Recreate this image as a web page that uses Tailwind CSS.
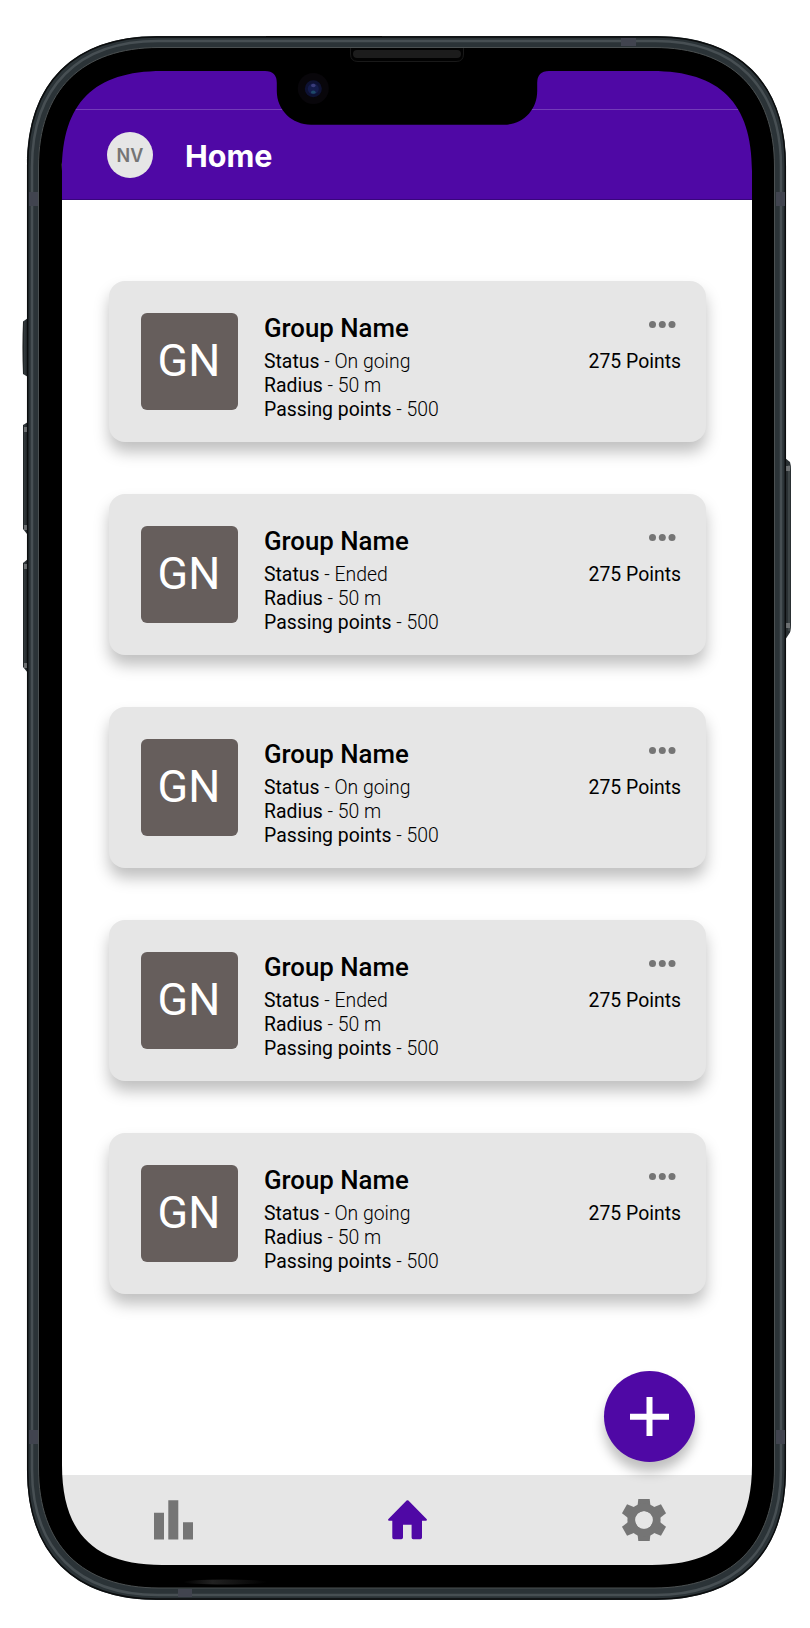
<!DOCTYPE html>
<html lang="en">
<head>
<meta charset="utf-8">
<title>Home</title>
<script src="https://cdn.jsdelivr.net/npm/@tailwindcss/browser@4"></script>
</head>
<body class="bg-white">
<div class="relative h-[1628px] w-[810px] overflow-hidden bg-white pl-[62px] pt-[71px] font-['Roboto',sans-serif] text-black">
  <!-- Screen -->
  <div class="relative flex h-[1494px] w-[690px] flex-col bg-white">
    <header class="flex h-[129px] flex-col border-b border-[#39067c] bg-[#4f08a5]">
      <div class="h-[39px] border-b border-[#733bb8]"></div>
      <div class="flex items-center gap-[32px] pl-[45px] pt-[22px]">
        <div class="flex size-[46px] items-center justify-center rounded-full bg-[#e6e6e6] pt-px font-['Inter',sans-serif] text-[18px] font-semibold text-[#757575]">NV</div>
        <h1 class="pt-px font-['Inter',sans-serif] text-[30.5px] leading-[45px] font-bold text-white">Home</h1>
      </div>
    </header>
    <main id="groups" class="flex flex-1 flex-col gap-[52px] px-[47px] pt-[81px]"></main>
    <nav class="flex h-[90px] items-start bg-[#e6e6e6]">
      <svg class="ml-[92px] mt-[25px] h-[40px] w-[39px]" viewBox="0 0 39 40" fill="#757575"><path d="M0 12.8h10v26.7H0zM14.3 .3h10v39.2h-10zM29 22.3h10v17.2H29z"/></svg>
      <svg class="ml-[195px] mt-[25px] h-[40px] w-[39px]" viewBox="0 0 39 40" fill="#4f08a5"><path d="M18.6.6Q19.5-.2 20.4.6L38.8 19.2Q39.2 20.7 38 20.7H34V37.6Q34 39.3 32.3 39.3H25.2Q23.6 39.3 23.6 37.6V24.8H15V37.6Q15 39.3 13.3 39.3H6Q4.300 39.300 4.300 37.600V20.700H1Q-.2 20.700.2 19.200Z"/></svg>
      <svg class="ml-[194.500px] mt-[23px] size-[44px] overflow-visible" viewBox="-22 -22 44 44" fill="#757575">
        <defs><path id="tooth" d="M-5.100-22.500H5.100L6.500-12H-6.500Z"/></defs>
        <path d="M-5.700-21H5.700L6.700-12H-6.700ZM-5.700 21H5.700L6.700 12H-6.700Z"/>
        <use href="#tooth" transform="rotate(60)"/><use href="#tooth" transform="rotate(120)"/>
        <use href="#tooth" transform="rotate(240)"/><use href="#tooth" transform="rotate(300)"/>
        <circle r="12.600" fill="none" stroke="#757575" stroke-width="8"/>
        <circle r="8.700" fill="#e6e6e6"/>
      </svg>
    </nav>
    <button class="absolute left-[542px] top-[1300px] flex size-[91px] items-center justify-center rounded-full bg-[#4f08a5] shadow-[0_10px_12px_rgba(0,0,0,0.25)]">
      <svg class="size-[39px]" viewBox="0 0 39 39" fill="#fff"><path d="M16.500 0h6v16.700H39v6H22.500V39h-6V22.700H0v-6h16.500z"/></svg>
    </button>
  </div>

  <!-- Device frame -->
  <svg class="pointer-events-none absolute left-0 top-0" width="810" height="1628" viewBox="0 0 810 1628" fill="none">
    <defs>
      <linearGradient id="btnL" x1="0" x2="1"><stop offset="0" stop-color="#050607"/><stop offset=".3" stop-color="#343b3e"/><stop offset="1" stop-color="#1b2023"/></linearGradient>
      <linearGradient id="gloss"><stop offset="0" stop-color="#222" stop-opacity="0"/><stop offset=".35" stop-color="#222"/><stop offset="1" stop-color="#222" stop-opacity="0"/></linearGradient>
    </defs>
    <g fill="url(#btnL)">
      <path d="M28 318L23 321.500Q22 347 23 374L28 377ZM28 422L23 425V529L27 534H28ZM28 559L23 563V667L28 673Z"/>
    </g>
    <path d="M785 458L790 462Q791 465 791 470V625Q791 632 789 634L785 640Z" fill="#2a3033"/>
    <path d="M789 465V631" stroke="#51585b"/>
    <path d="M785.500 458V640M27.500 318V377M27.500 422V534M27.500 559V673" stroke="#070808"/>
    <g fill="#6d7072"><rect x="24" y="427" width="4" height="5"/><rect x="24" y="525" width="4" height="5"/><rect x="24" y="564" width="4" height="5"/><rect x="24" y="663" width="4" height="5"/><rect x="786" y="466" width="4" height="5"/><rect x="786" y="623" width="4" height="5"/></g>

    <path fill-rule="evenodd" fill="#2b3337" d="M27 166C27 83 74 36 157 36H656C739 36 786 83 786 166V1470C786 1553 739 1600 656 1600H157C74 1600 27 1553 27 1470ZM50 170C50 97 88 59 161 59H653C726 59 764 97 764 170V1466C764 1539 726 1577 653 1577H161C88 1577 50 1539 50 1466Z"/>
    <path stroke="#0b0d0e" stroke-width="1.500" d="M27.700 166C27.700 83 74 37 157 37H656C739 37 785.300 83 785.300 166V1470C785.300 1553 739 1599 656 1599H157C74 1599 27.700 1553 27.700 1470Z"/>
    <path stroke="#474f53" stroke-width="2.500" d="M32 167C32 87 78 41 158 41H655C735 41 781 87 781 167V1469C781 1549 735 1595 655 1595H158C78 1595 32 1549 32 1469Z"/>
    <g fill="#41444f"><rect x="29" y="192" width="9" height="14"/><rect x="776" y="192" width="9" height="14"/><rect x="29" y="1430" width="9" height="14"/><rect x="776" y="1430" width="9" height="14"/><rect x="621" y="38" width="15" height="8"/><rect x="178" y="1589" width="14" height="8"/></g>

    <!-- Bezel with the screen opening and notch -->
    <path fill-rule="evenodd" fill="#000" stroke="none" d="M38.500 167C38.500 90 82 47.500 159 47.500H654C731 47.500 774.500 90 774.500 167V1468C774.500 1545 731 1588 654 1588H159C82 1588 38.500 1545 38.500 1468ZM62 171C62 103 94 71 162 71H265Q276.800 71 276.800 83V91C276.800 110 292 124.700 311 124.700H504C523 124.700 537.200 110 537.200 91V83Q537.200 71 549 71H652C720 71 752 103 752 171V1465C752 1533 720 1565 652 1565H162C94 1565 62 1533 62 1465Z"/>
    <path stroke="#4b5051" d="M38.500 167C38.500 90 82 47.500 159 47.500H654C731 47.500 774.500 90 774.500 167V1468C774.500 1545 731 1588 654 1588H159C82 1588 38.500 1545 38.500 1468Z"/>
    <ellipse cx="225" cy="1582" rx="42" ry="2.500" fill="url(#gloss)"/>
    <path d="M350.500 48V54Q350.500 61.500 358 61.500H456Q463.500 61.500 463.500 54V48" stroke="#191919" fill="#020202"/>
    <rect x="353" y="50" width="108" height="8" rx="4" fill="#1c1c1c"/>
    <circle cx="313.300" cy="88.500" r="15.500" fill="#08060a"/>
    <circle cx="313.300" cy="88.800" r="8.500" fill="#0e1233"/>
    <circle cx="313.300" cy="88.800" r="5.500" fill="#141c4c"/>
    <ellipse cx="313.300" cy="85.500" rx="2.300" ry="1.800" fill="#3a3d7a"/>
    <ellipse cx="313.300" cy="92.200" rx="2.300" ry="1.600" fill="#1e4a68"/>
    <path d="M266 36.500H382" stroke="#050505"/>
  </svg>
</div>
<script>
const statuses = ["On going", "Ended", "On going", "Ended", "On going"];
document.getElementById("groups").innerHTML = statuses.map(status => `
  <article class="flex h-[161px] w-[597px] shrink-0 items-start rounded-2xl bg-[#e6e6e6] pl-8 pr-[25px] pt-8 shadow-[0_10px_15px_rgba(0,0,0,0.25)]">
    <div class="flex size-[97px] items-center justify-center rounded-md bg-[#665e5c] pr-px pb-[2px] text-[45px] text-white">GN</div>
    <div class="ml-[26px] flex-1 whitespace-nowrap">
      <h2 class="text-[25.800px] leading-[30px] font-medium">Group Name</h2>
      <div class="mt-[7px] text-[19.4px] leading-[24.2px] font-light">
        <p><span class="font-normal">Status</span> - ${status}</p>
        <p><span class="font-normal">Radius</span> - 50 m</p>
        <p><span class="font-normal">Passing points</span> - 500</p>
      </div>
    </div>
    <div class="flex flex-col items-end">
      <svg class="mr-[5px] mt-2 h-[8px] w-[28px]" viewBox="0 0 28 8" fill="#757575"><circle cx="4.500" cy="3.500" r="3.500"/><circle cx="14.300" cy="3.500" r="3.500"/><circle cx="24" cy="3.500" r="3.500"/></svg>
      <p class="mt-[21px] text-[19.4px] leading-[24.2px]">275 Points</p>
    </div>
  </article>`).join("");
</script>
</body>
</html>
